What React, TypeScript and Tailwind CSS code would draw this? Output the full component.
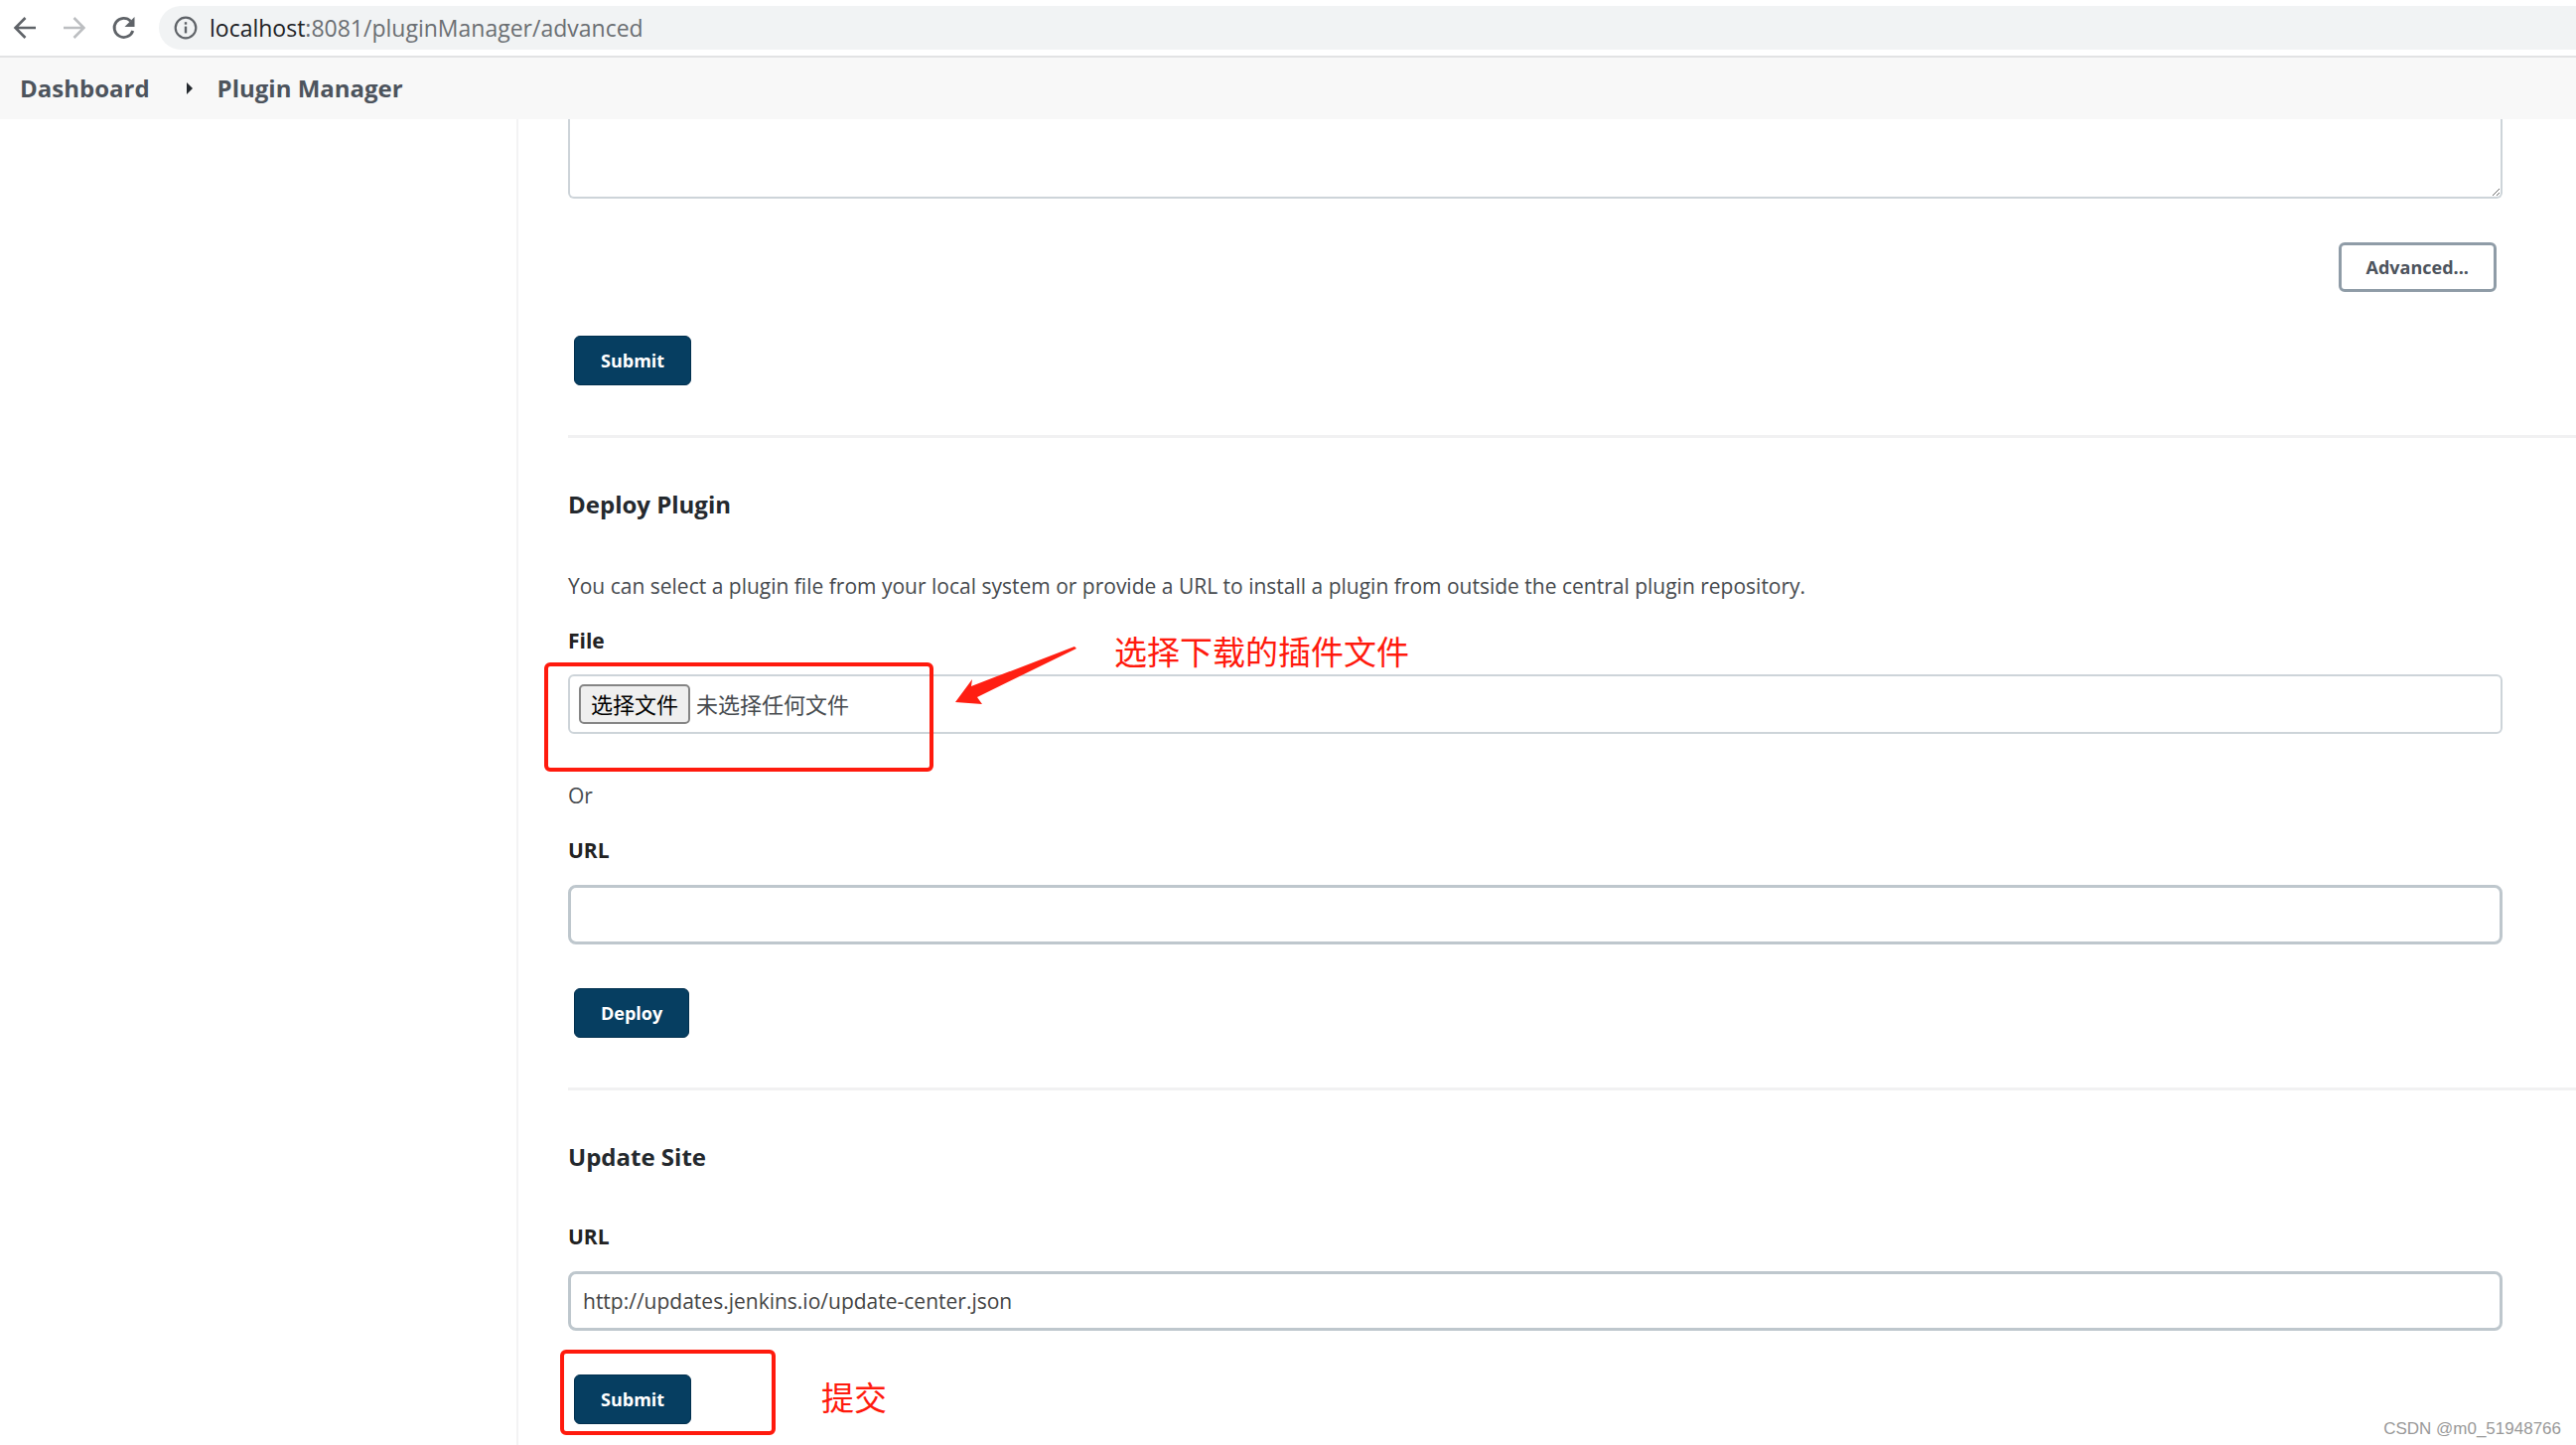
import type { ReactNode } from "react";

function BackIcon() {
  return (
    <svg viewBox="0 0 24 24" className="h-6 w-6" fill="none" stroke="#5f6368" strokeWidth="2.6">
      <path d="M24 12H4M13.500 2L3.500 12l10 10" />
    </svg>
  );
}

function ForwardIcon() {
  return (
    <svg viewBox="0 0 24 24" className="h-6 w-6" fill="none" stroke="#bcbec1" strokeWidth="2.6">
      <path d="M2 12h20M12.500 2l10 10-10 10" />
    </svg>
  );
}

function ReloadIcon() {
  return (
    <svg viewBox="0 0 24 24" className="h-6 w-6" fill="none">
      <path d="M19.600 5.200A9.600 9.600 0 1 0 21.800 15" stroke="#5f6368" strokeWidth="2.8" />
      <path d="M23.500 1v10H13.500z" fill="#5f6368" />
    </svg>
  );
}

function InfoIcon() {
  return (
    <svg viewBox="0 0 24 24" className="h-6 w-6 shrink-0" fill="none">
      <circle cx="12" cy="12" r="10.3" stroke="#5f6368" strokeWidth="2.2" />
      <path d="M12 10.6v6.8" stroke="#5f6368" strokeWidth="2.4" />
      <path d="M12 6.2v2.5" stroke="#5f6368" strokeWidth="2.4" />
    </svg>
  );
}

function BrowserBar() {
  return (
    <div className="flex h-14 items-center bg-white pl-3">
      <div className="flex items-center gap-[26px]">
        <button type="button" aria-label="Back">
          <BackIcon />
        </button>
        <button type="button" aria-label="Forward">
          <ForwardIcon />
        </button>
        <button type="button" aria-label="Reload">
          <ReloadIcon />
        </button>
      </div>
      <div className="ml-6 flex h-11 flex-1 items-center gap-3 rounded-l-full bg-[#f1f3f4] pl-[15px] text-[23px] leading-8">
        <InfoIcon />
        <span className="text-[#6b6f73]">
          <span className="text-[#202124]">localhost</span>:8081/pluginManager/advanced
        </span>
      </div>
    </div>
  );
}

function Breadcrumbs() {
  return (
    <nav
      aria-label="Breadcrumb"
      className="flex h-16 items-center border-t-2 border-[#e2e3e4] bg-[#f8f8f8] pl-5 text-[24px] leading-8 font-bold text-[#4d545d]"
    >
      <a href="#dashboard">Dashboard</a>
      <svg viewBox="0 0 8 12" className="mr-6 ml-9 h-3 w-2" fill="#24292e">
        <path d="M1 0l6 6-6 6z" />
      </svg>
      <a href="#plugin-manager">Plugin Manager</a>
    </nav>
  );
}

function PrimaryButton({ children }: { children: ReactNode }) {
  return (
    <button
      type="button"
      className="ml-[6px] h-[50px] rounded-md border border-[#02304f] bg-[#063e61] px-[26px] text-[18px] leading-7 font-bold text-white"
    >
      {children}
    </button>
  );
}

function SectionTitle({ children }: { children: ReactNode }) {
  return <h2 className="mt-[51px] text-[24px] leading-8 font-bold text-[#24292e]">{children}</h2>;
}

function Divider() {
  return <hr className="mt-[50px] border-t-3 border-[#f1f1f2]" />;
}

const fieldLabel = "block text-[21px] leading-7 font-bold text-[#222]";
const textField =
  "mt-[21px] block h-[60px] w-full rounded-lg border-3 border-[#bec7cd] bg-white px-3 text-[21px] leading-7 text-[#444]";

export default function App() {
  return (
    <div
      className="relative flex min-h-screen flex-col overflow-hidden bg-white text-[21px] leading-7 text-[#464a4e]"
      style={{ fontFamily: '"Open Sans", "Noto Sans CJK SC", sans-serif' }}
    >
      <BrowserBar />
      <Breadcrumbs />
      <div className="flex flex-1">
        <aside className="w-[522px] shrink-0 border-r-2 border-[#f3f3f4]" />
        <main className="min-w-0 flex-1 pl-[50px]">
          <section className="pr-[74px]">
            <textarea
              aria-label="No proxy hosts"
              className="block h-20 w-full resize-y rounded-b-md border-2 border-t-0 border-[#cdd4d9] bg-white px-3"
            />
            <div className="mt-11 flex justify-end pr-[6px]">
              <button
                type="button"
                className="h-[50px] rounded-md border-3 border-[#8f9ca7] bg-white px-[25px] text-[18px] leading-7 font-bold text-[#4d545d]"
              >
                Advanced...
              </button>
            </div>
            <div className="mt-11 flex">
              <PrimaryButton>Submit</PrimaryButton>
            </div>
          </section>

          <Divider />

          <section className="pr-[74px]">
            <SectionTitle>Deploy Plugin</SectionTitle>
            <p className="mt-[52px]">
              You can select a plugin file from your local system or provide a URL to install a plugin from outside
              the central plugin repository.
            </p>
            <label htmlFor="plugin-file" className={`mt-[27px] ${fieldLabel}`}>
              File
            </label>
            <div className="relative mt-5">
              <input id="plugin-file" type="file" className="sr-only" />
              <label
                htmlFor="plugin-file"
                className="flex h-[60px] items-center gap-[6px] rounded-md border-2 border-[#cdd4d9] pl-[9px] text-[22px] leading-8"
              >
                <span className="flex h-10 items-center rounded-[5px] border-2 border-[#858585] bg-[#efefef] px-[10px] text-black">
                  选择文件
                </span>
                <span>未选择任何文件</span>
              </label>
              <div className="pointer-events-none absolute -top-3 -left-6 h-[110px] w-[392px] rounded-md border-4 border-[#ff1a0d]" />
              <svg
                viewBox="0 0 124 60"
                className="pointer-events-none absolute -top-[28px] left-[390px] h-[60px] w-[124px]"
                fill="#ff1f12"
              >
                <path d="M120 0L16 40L17 33L0 56l27 2-5-7L122 2z" />
              </svg>
              <span className="absolute -top-[42px] left-[550px] text-[33px] leading-10 whitespace-nowrap text-[#ff1a0d]">
                选择下载的插件文件
              </span>
            </div>
            <p className="mt-[48px]">Or</p>
            <label htmlFor="plugin-url" className={`mt-[27px] ${fieldLabel}`}>
              URL
            </label>
            <input id="plugin-url" type="text" className={textField} />
            <div className="mt-11 flex">
              <PrimaryButton>Deploy</PrimaryButton>
            </div>
          </section>

          <Divider />

          <section className="pr-[74px] pb-5">
            <SectionTitle>Update Site</SectionTitle>
            <label htmlFor="site-url" className={`mt-[50px] ${fieldLabel}`}>
              URL
            </label>
            <input
              id="site-url"
              type="text"
              defaultValue="http://updates.jenkins.io/update-center.json"
              className={textField}
            />
            <div className="relative mt-11 flex">
              <PrimaryButton>Submit</PrimaryButton>
              <div className="pointer-events-none absolute -top-[25px] -left-2 h-[86px] w-[217px] rounded-md border-4 border-[#ff1a0d]" />
              <span className="absolute top-1 left-[255px] text-[33px] leading-10 whitespace-nowrap text-[#ff1a0d]">
                提交
              </span>
            </div>
          </section>
        </main>
      </div>
      <span
        className="absolute right-[15px] bottom-1 text-[17px] leading-6 text-[#999]"
        style={{ fontFamily: '"Liberation Sans", sans-serif' }}
      >
        CSDN @m0_51948766
      </span>
    </div>
  );
}
